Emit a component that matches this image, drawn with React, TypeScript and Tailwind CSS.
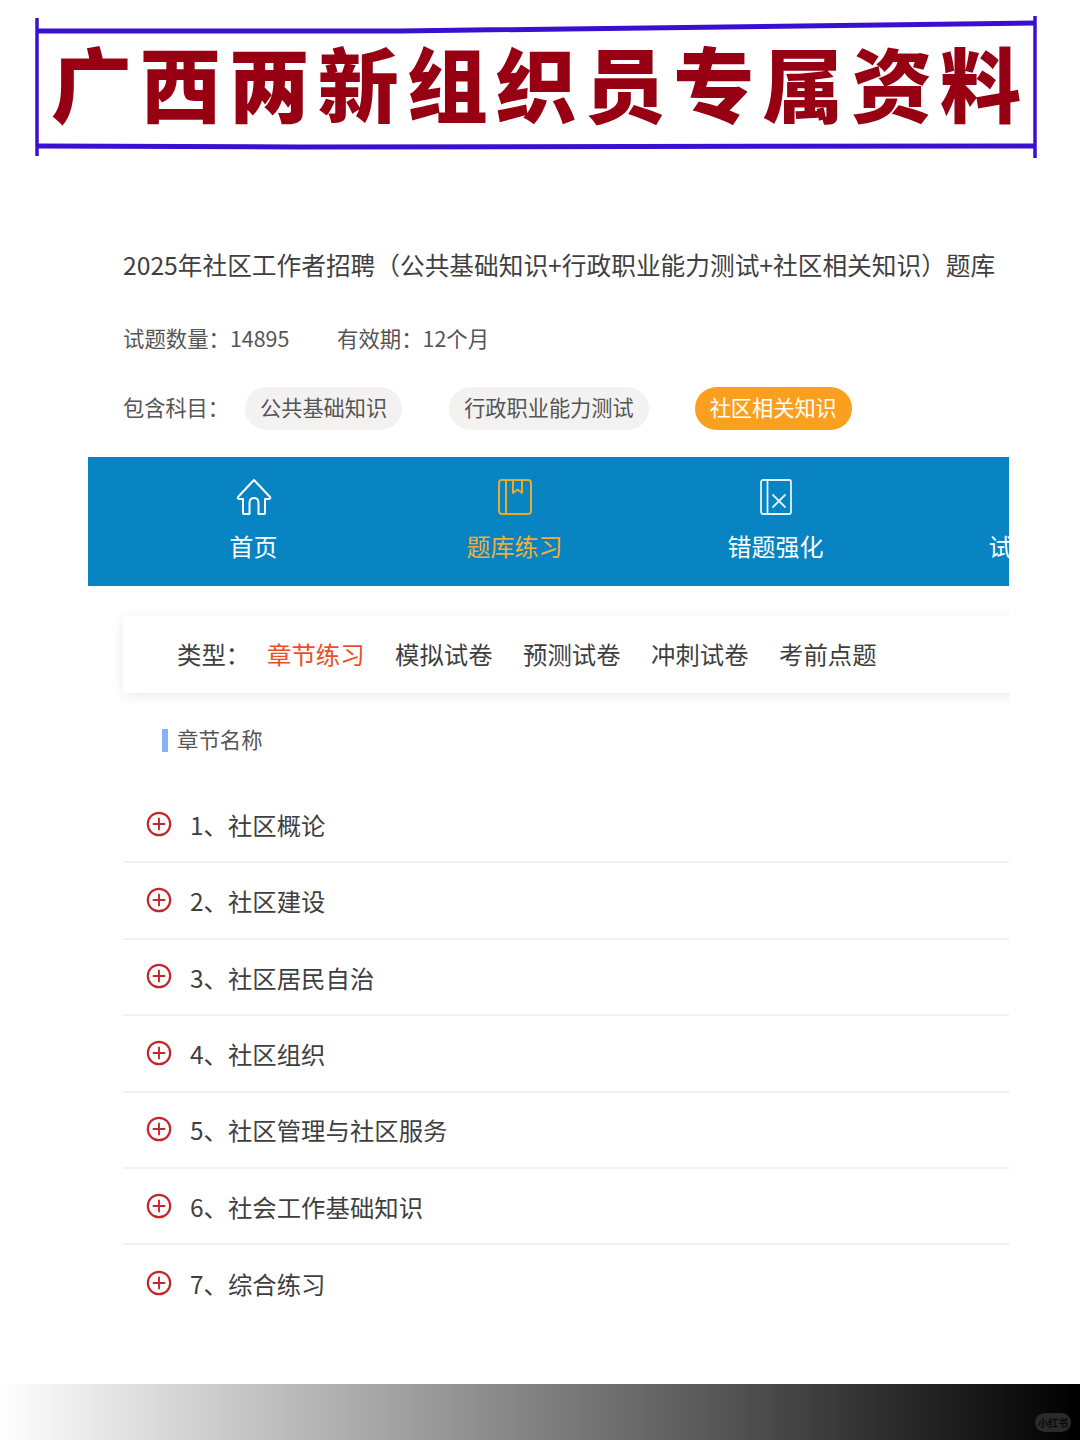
import React from "react";

const font = { fontFamily: '"Noto Sans CJK SC", "Noto Sans", sans-serif' };

const HomeIcon = () => (
  <svg width="36" height="38" viewBox="0 0 36 38" fill="none" stroke="#ffffff" strokeWidth="2" strokeLinejoin="round" strokeLinecap="round">
    <path d="M18 2 L34 19 Q35 21 32 21 H29 V35 Q29 36 28 36 H22.5 V25 Q22.5 20 18 20 Q13.5 20 13.5 25 V36 H8 Q7 36 7 35 V21 H4 Q1 21 2 19 Z" />
  </svg>
);

const BookIcon = () => (
  <svg width="34" height="37" viewBox="0 0 34 37" fill="none" stroke="#eca92b" strokeWidth="2" strokeLinejoin="round">
    <rect x="1" y="1" width="32" height="34" rx="3" />
    <path d="M8 1 V35" />
    <path d="M15 1 V14 L19.5 10.5 L24 14 V1" />
  </svg>
);

const BookXIcon = () => (
  <svg width="32" height="36" viewBox="0 0 32 36" fill="none" stroke="#e3f1f9" strokeWidth="1.8" strokeLinejoin="round" strokeLinecap="round">
    <rect x="1" y="1" width="30" height="34" rx="2" />
    <path d="M7.5 1 V35" />
    <path d="M13 16 L25 28 M25 16 L13 28" />
  </svg>
);

const PlusIcon = () => (
  <svg width="26" height="26" viewBox="0 0 26 26" fill="none" stroke="#c3272b" strokeLinecap="round" className="shrink-0 -mt-[3px]">
    <circle cx="13" cy="13" r="11.2" strokeWidth="2.2" />
    <path d="M7.5 13 H18.5 M13 7.5 V18.5" strokeWidth="1.9" />
  </svg>
);

const chapters = [
  "1、社区概论",
  "2、社区建设",
  "3、社区居民自治",
  "4、社区组织",
  "5、社区管理与社区服务",
  "6、社会工作基础知识",
  "7、综合练习",
];

export default function App() {
  return (
    <div className="w-[1080px] h-[1440px] bg-white flex flex-col overflow-hidden text-[#3f3f3f]" style={font}>
      {/* Banner */}
      <div className="relative h-[160px] shrink-0 flex items-start justify-center pt-[15px]">
        <svg className="absolute inset-0" width="1080" height="160" fill="none" stroke="#3a10d0">
          <path d="M37 31 L400 31 Q700 28 1035 23" strokeWidth="5" />
          <path d="M37 146 L300 147 L1035 146" strokeWidth="5" />
          <path d="M37 18 V156" strokeWidth="3.5" />
          <path d="M1035 16 V158" strokeWidth="3.5" />
        </svg>
        <h1 className="relative text-[81px] leading-[132px] font-black text-[#960012] tracking-[7.9px] whitespace-nowrap">
          广西两新组织员专属资料
        </h1>
      </div>

      {/* Course info */}
      <div className="pl-[123px] pt-[83px] shrink-0">
        <p className="text-[24.7px] leading-[42px] whitespace-nowrap">2025年社区工作者招聘（公共基础知识+行政职业能力测试+社区相关知识）题库</p>
        <div className="flex mt-[37px] text-[21.4px] leading-[32px] text-[#555555]">
          <span className="w-[214px]">试题数量：14895</span>
          <span>有效期：12个月</span>
        </div>
        <div className="flex items-center mt-[33px] text-[21.2px] text-[#555555]">
          <span className="w-[122px] pb-[4px]">包含科目：</span>
          <span className="h-[43px] px-[15px] pb-[3px] rounded-full bg-[#f3f2f1] flex items-center">公共基础知识</span>
          <span className="ml-[47px] h-[43px] px-[15px] pb-[3px] rounded-full bg-[#f3f2f1] flex items-center">行政职业能力测试</span>
          <span className="ml-[46px] h-[43px] px-[15px] pb-[3px] rounded-full bg-[#fb9f1f] text-white flex items-center">社区相关知识</span>
        </div>
      </div>

      {/* Clipped app area */}
      <div className="ml-[88px] mt-[27px] w-[921px] overflow-hidden shrink-0 pb-[6px]">
        <nav className="h-[129px] bg-[#0784c1] flex pl-[35px] text-[24px] text-white">
          {[
            { label: "首页", icon: <HomeIcon /> },
            { label: "题库练习", icon: <BookIcon />, active: true },
            { label: "错题强化", icon: <BookXIcon /> },
            { label: "试题收藏", icon: null },
          ].map((item) => (
            <div
              key={item.label}
              className={`w-[261px] shrink-0 flex flex-col items-center ${item.active ? "text-[#f1ae3c]" : ""}`}
            >
              <div className="h-[40px] mt-[20px] flex items-center justify-center">{item.icon}</div>
              <span className="mt-[11px] leading-[36px] whitespace-nowrap">{item.label}</span>
            </div>
          ))}
        </nav>

        <div className="ml-[35px] mt-[30px] h-[77px] w-[900px] bg-white rounded-[4px] shadow-[0_2px_14px_rgba(0,0,0,0.09)] flex items-center pl-[54px] text-[24.4px] whitespace-nowrap">
          <span className="w-[90px]">类型：</span>
          <span className="w-[128px] text-[#ee4d24]">章节练习</span>
          <span className="w-[128px]">模拟试卷</span>
          <span className="w-[128px]">预测试卷</span>
          <span className="w-[128px]">冲刺试卷</span>
          <span>考前点题</span>
        </div>

        <div className="ml-[74px] mt-[36px] flex items-center h-[23px]">
          <span className="w-[6px] h-[23px] bg-[#8ab0f5]" />
          <span className="ml-[9px] text-[21.4px] leading-[23px] text-[#555555] -mt-[4px]">章节名称</span>
        </div>

        <ul className="ml-[35px] mt-[35px] text-[24.4px]">
          {chapters.map((c, i) => (
            <li
              key={c}
              className={`h-[76.4px] pl-[23px] pt-[2px] flex items-center gap-[18px] ${i < chapters.length - 1 ? "border-b-2 border-[#f1f1f1]" : ""}`}
            >
              <PlusIcon />
              <span className="whitespace-nowrap">{c}</span>
            </li>
          ))}
        </ul>
      </div>

      {/* Bottom gradient */}
      <div className="mt-auto h-[56px] shrink-0 relative bg-linear-to-r/srgb from-white to-black">
        <span className="absolute right-[9px] bottom-[8px] w-[36px] h-[19px] rounded-full bg-[#2a2a2a] text-[#0a0a0a] text-[10px] leading-[19px] text-center font-bold">小红书</span>
      </div>
    </div>
  );
}
